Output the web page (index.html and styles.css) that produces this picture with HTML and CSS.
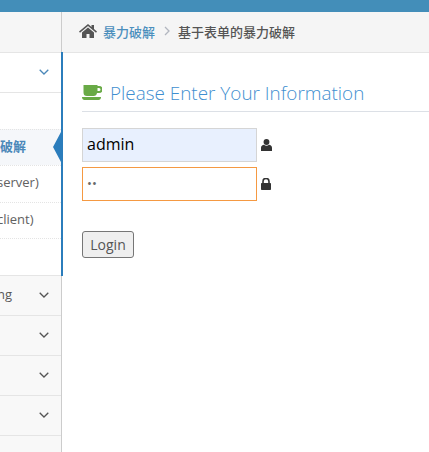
FILE: index.html
```html
<!DOCTYPE html>
<html lang="zh">
<head>
    <meta charset="UTF-8">
    <meta name="viewport" content="width=device-width, initial-scale=1.0">
    <title>Get the pikachu</title>
    <link rel="stylesheet" href="styles.css">
</head>
<body>
    <div class="navbar"><span class="brand">Pikachu 漏洞练习平台 pika~pika~</span></div>

    <div class="layout">
        <div class="sidebar">
            <div class="nav-top"></div>
            <div class="nav-item open">
                <svg class="arrow" viewBox="0 0 10 6"><path d="M.7.7 5 5 9.3.7" fill="none" stroke="#4b88b9" stroke-width="1.3"/></svg>
            </div>
            <div class="submenu">
                <div class="sub-gap"></div>
                <div class="sub-item active">基于表单的暴力破解</div>
                <div class="sub-item">验证码绕过(on server)</div>
                <div class="sub-item">验证码绕过(on client)</div>
                <div class="sub-item">token防爆破?</div>
            </div>
            <div class="nav-item">
                <span class="nav-label">Cross-Site Scripting</span>
                <svg class="arrow" viewBox="0 0 10 6"><path d="M.7.7 5 5 9.3.7" fill="none" stroke="#555" stroke-width="1.3"/></svg>
            </div>
            <div class="nav-item">
                <svg class="arrow" viewBox="0 0 10 6"><path d="M.7.7 5 5 9.3.7" fill="none" stroke="#555" stroke-width="1.3"/></svg>
            </div>
            <div class="nav-item">
                <svg class="arrow" viewBox="0 0 10 6"><path d="M.7.7 5 5 9.3.7" fill="none" stroke="#555" stroke-width="1.3"/></svg>
            </div>
            <div class="nav-item">
                <svg class="arrow" viewBox="0 0 10 6"><path d="M.7.7 5 5 9.3.7" fill="none" stroke="#555" stroke-width="1.3"/></svg>
            </div>
        </div>

        <div class="main">
            <div class="breadcrumbs">
                <svg class="home" viewBox="0 0 18 14"><path d="M9 0 0 7.500l1 1.200L9 2l8 6.700 1-1.200-3-2.500V1h-2.500v2z" fill="#555"/><path d="M3 8.500 9 3.500l6 5V14h-4.500v-4h-3v4H3z" fill="#555"/></svg>
                <a class="crumb-link">暴力破解</a>
                <svg class="crumb-sep" viewBox="0 0 6 10"><path d="M1 1l4 4-4 4" fill="none" stroke="#b2b6bf" stroke-width="1.300"/></svg>
                <span class="crumb-current">基于表单的暴力破解</span>
            </div>

            <div class="content">
                <h4 class="title">
                    <svg class="coffee" viewBox="0 0 20 15"><path d="M1.500 0H15.500V1H17a3 3 0 0 1 0 7H15A3.500 3.500 0 0 1 11.500 11H5A3.500 3.500 0 0 1 1.500 7.500zM15.500 3v3H17a1.500 1.500 0 0 0 0-3z" fill="#69aa46" fill-rule="evenodd"/><path d="M0 12H19C19 14 18 15 16.500 15H2.500C1 15 0 14 0 12z" fill="#69aa46"/></svg>
                    Please Enter Your Information
                </h4>
                <form class="login-form">
                    <div class="field">
                        <input class="input filled" type="text" value="admin">
                        <svg class="field-icon user" viewBox="0 0 12 13"><circle cx="6" cy="3.200" r="3.200" fill="#333"/><path d="M0 13V9.500C0 7.800 1.500 6.600 3.300 6.300 4 7 5 7.400 6 7.400s2-.4 2.700-1.100C10.500 6.600 12 7.800 12 9.500V13z" fill="#333"/></svg>
                    </div>
                    <div class="field">
                        <input class="input focused" type="password" value="12">
                        <svg class="field-icon lock" viewBox="0 0 10 12"><path d="M2.800 5V3.400a2.200 2.200 0 0 1 4.400 0V5zM1.200 5V3.400a3.800 3.800 0 0 1 7.600 0V5h.4c.5 0 .8.300.8.800v5.400c0 .5-.3.800-.8.800H.8c-.5 0-.8-.3-.8-.8V5.800c0-.5.3-.8.800-.8z" fill="#333" fill-rule="evenodd"/></svg>
                    </div>
                    <button class="submit" type="button">Login</button>
                </form>
            </div>
        </div>
    </div>
</body>
</html>
```

FILE: styles.css
```css
* {
    margin: 0;
    padding: 0;
    box-sizing: border-box;
}

html, body {
    height: 100%;
    overflow: hidden;
}

body {
    background: #fff;
    font-family: "Open Sans", "Noto Sans CJK SC", sans-serif;
    font-size: 13px;
    color: #393939;
}

.navbar {
    height: 12px;
    background: #438eb9;
    overflow: hidden;
    white-space: nowrap;
}

.brand {
    display: block;
    margin-top: -29px;
    text-indent: -63px;
    color: #fff;
    font-size: 20px;
}

.layout {
    display: flex;
    height: 440px;
}

.sidebar {
    position: relative;
    width: 62px;
    flex: none;
    background: #f8f8f8;
    border-right: 1px solid #ccc;
}

/* blue line beside the open group */
.sidebar::after {
    content: "";
    position: absolute;
    left: 61px;
    top: 40px;
    width: 2px;
    height: 224px;
    background: #2b7dbc;
}

.nav-top {
    height: 41px;
    background: #f6f6f6;
    border-bottom: 1px solid #e5e5e5;
}

.nav-item {
    position: relative;
    height: 40px;
    background: #f8f8f8;
    border-bottom: 1px solid #e5e5e5;
    overflow: hidden;
}

.nav-item.open {
    background: #fff;
}

.nav-label {
    position: absolute;
    right: 49px;
    top: 9px;
    white-space: nowrap;
    color: #585858;
}

.arrow {
    position: absolute;
    left: 39px;
    top: 16px;
    width: 10px;
    height: 6px;
}

.submenu {
    background: #fff;
    border-bottom: 1px solid #e5e5e5;
    height: 183px;
}

.sub-gap {
    height: 36px;
}

.sub-item {
    position: relative;
    height: 36.4px;
    line-height: 32px;
    border-top: 1px dotted #e4e4e4;
    white-space: nowrap;
    color: #616161;
    text-indent: -91px;
    overflow: hidden;
}

.sub-item.active {
    background: #f5f7fa;
    color: #4b88b9;
    font-weight: 600;
}

.sub-item.active::after {
    content: "";
    position: absolute;
    right: 0;
    top: 2px;
    border-style: solid;
    border-color: transparent #2b7dbc transparent transparent;
    border-width: 15px 8px 15px 0;
}

.main {
    flex: 1;
    min-width: 0;
}

.breadcrumbs {
    height: 41px;
    display: flex;
    align-items: center;
    background: #f5f5f5;
    border-bottom: 1px solid #e5e5e5;
    padding: 0 0 2px 17px;
    font-weight: 500;
}

.home {
    width: 18px;
    height: 14px;
    margin-right: 6px;
}

.crumb-link {
    color: #4c8fbd;
}

.crumb-sep {
    width: 6px;
    height: 10px;
    margin: 0 8px 0 9px;
}

.crumb-current {
    color: #555;
}

.content {
    padding-left: 20px;
}

.title {
    margin-top: 27px;
    height: 32px;
    font-size: 18.9px;
    font-weight: 300;
    line-height: 26px;
    color: #3f8fd0;
    border-bottom: 1px solid #dce0e6;
    display: flex;
    align-items: center;
    gap: 8px;
    padding-bottom: 6px;
}

.coffee {
    width: 20px;
    height: 15px;
}

.login-form {
    margin-top: 16px;
}

.field {
    display: flex;
    align-items: center;
    gap: 4px;
    margin-bottom: 5px;
}

.input {
    width: 175px;
    height: 34px;
    font-family: inherit;
    font-size: 16px;
    padding: 0 4px 2px;
    color: #000;
    outline: none;
    border: 1px solid #d5d5d5;
}

.input.filled {
    background: #e8f0fe;
}

.input.focused {
    border-color: #f59942;
    color: #696969;
    font-size: 13px;
}

.field-icon.user {
    width: 11px;
    height: 12px;
}

.field-icon.lock {
    width: 10px;
    height: 12px;
}

.submit {
    display: block;
    margin-top: 30px;
    width: 52px;
    height: 27px;
    font-family: inherit;
    font-size: 14px;
    color: #555;
    background: #efefef;
    border: 1px solid #767676;
    border-radius: 3px;
}
```
